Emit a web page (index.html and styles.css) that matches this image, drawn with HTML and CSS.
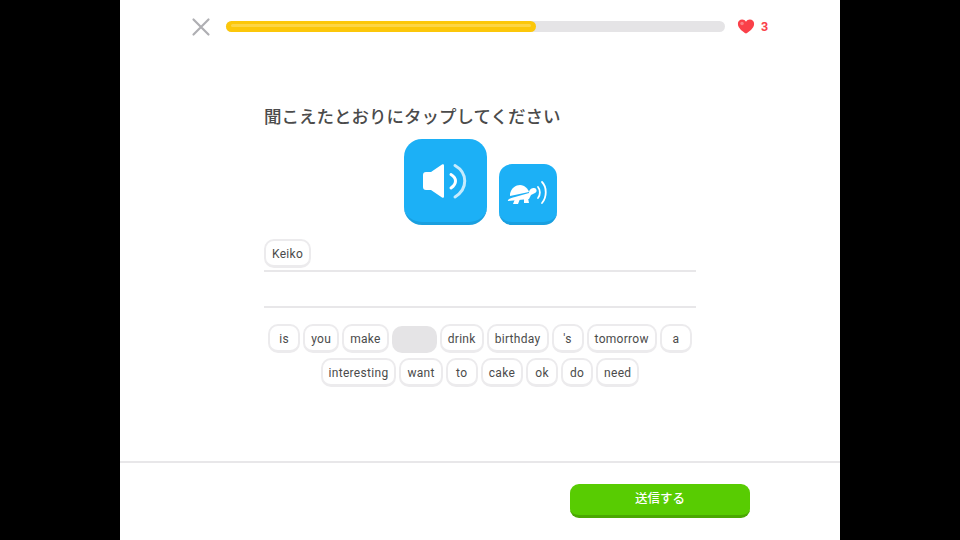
FILE: index.html
```html
<!DOCTYPE html>
<html lang="ja">
<head>
  <meta charset="UTF-8" />
  <title>Lesson</title>
  <link rel="stylesheet" href="styles.css">
</head>
<body>

<div class="app">
  <div class="topbar">
    <svg class="close" width="20" height="20" viewBox="0 0 20 20">
      <path d="M2.500 2.500 L17.500 17.500 M17.500 2.500 L2.500 17.500" stroke="#afafb3" stroke-width="2.2" stroke-linecap="round" fill="none"/>
    </svg>
    <div class="progress">
      <div class="progress-fill"><div class="progress-shine"></div></div>
    </div>
    <svg class="heart" width="18" height="15" viewBox="0 0 20 17">
      <path d="M10 16.500 C7 14.600 1 10.800 .8 5.600 C.7 2.600 3 .6 5.600 .6 C7.500 .6 9 1.500 10 3 C11 1.500 12.500 .6 14.400 .6 C17 .6 19.300 2.600 19.200 5.600 C19 10.800 13 14.600 10 16.500 Z" fill="#fa4049"/>
      <circle cx="5.500" cy="5" r="2" fill="#fc7f85"/>
    </svg>
    <span class="hearts">3</span>
  </div>

  <div class="main">
    <h2>聞こえたとおりにタップしてください</h2>

    <div class="audio">
      <div class="audio-btn big">
        <svg width="46" height="38" viewBox="0 0 46 38">
          <path d="M1 13 C1 11 2 10 4 10 L9 10 L20 2.500 C21 1.800 22 2.200 22 3.500 L22 34.500 C22 35.800 21 36.200 20 35.500 L9 28 L4 28 C2 28 1 27 1 25 Z" fill="#fff"/>
          <path d="M29 12.500 C35 16 35 22 29 26" stroke="#fff" stroke-width="3" stroke-linecap="round" fill="none"/>
          <path d="M33 3.500 C46 11 46 27 33 35" stroke="#c5ebfd" stroke-width="3" stroke-linecap="round" fill="none"/>
        </svg>
      </div>
      <div class="audio-btn small">
        <svg width="42" height="26" viewBox="0 0 42 26">
          <path d="M3 14 C4 8 9 5 13 5 C18 5 21 9 22 12 L3 16 Z" fill="#fff"/>
          <path d="M22 13 C22 9 25 8 27 8 C30 8 30.500 12 28 13 L24 15 L22 19 L1 21 C0 19 5 18 8 17 Z" fill="#fff"/>
          <path d="M8 19 L6 24 L11 24 L13 19 Z M17 18 L17 23 L22 23 L21 18 Z" fill="#fff"/>
          <path d="M31 7 C33.500 10 33.500 15 31 18" stroke="#fff" stroke-width="1.800" stroke-linecap="round" fill="none"/>
          <path d="M35 2 C40 7 40 17 35 23" stroke="#fff" stroke-width="1.800" stroke-linecap="round" fill="none"/>
        </svg>
      </div>
    </div>

    <div class="answer-line first">
      <span class="tile">Keiko</span>
    </div>
    <div class="answer-line second"></div>

    <div class="bank">
      <div class="bank-row">
        <span class="tile">is</span>
        <span class="tile">you</span>
        <span class="tile">make</span>
        <span class="tile empty"></span>
        <span class="tile">drink</span>
        <span class="tile">birthday</span>
        <span class="tile">'s</span>
        <span class="tile">tomorrow</span>
        <span class="tile">a</span>
      </div>
      <div class="bank-row">
        <span class="tile">interesting</span>
        <span class="tile">want</span>
        <span class="tile">to</span>
        <span class="tile">cake</span>
        <span class="tile">ok</span>
        <span class="tile">do</span>
        <span class="tile">need</span>
      </div>
    </div>
  </div>

  <div class="footer">
    <button type="button">送信する</button>
  </div>
</div>

</body>
</html>
```

FILE: styles.css
```css
html, body {
  height: 100%;
}

body {
  margin: 0;
  background-color: #000;
  font-family: "Roboto", "Noto Sans CJK JP", sans-serif;
}

.app {
  width: 720px;
  height: 540px;
  margin: 0 auto;
  background: #fff;
  display: flex;
  flex-direction: column;
}

.topbar {
  display: flex;
  align-items: center;
  height: 53px;
  padding-left: 71px;
  box-sizing: border-box;
}

.close {
  flex: none;
}

.progress {
  width: 499px;
  height: 11px;
  margin-left: 15px;
  background: #e5e4e6;
  border-radius: 6px;
}

.progress-fill {
  width: 310px;
  height: 11px;
  padding: 3px 5px 0;
  box-sizing: border-box;
  background: #fcc70a;
  border-radius: 6px;
}

.progress-shine {
  height: 3px;
  background: #fdd544;
  border-radius: 2px;
}

.heart {
  margin-left: 12px;
  flex: none;
}

.hearts {
  margin-left: 6px;
  color: #fa4049;
  font-size: 12.5px;
  font-weight: bold;
}

.main {
  flex: 1;
  padding: 0 144px;
}

h2 {
  margin: 50px 0 0;
  height: 26px;
  line-height: 26px;
  font-family: "Noto Sans CJK JP", sans-serif;
  font-size: 17.5px;
  font-weight: 500;
  color: #4b4b4b;
  white-space: nowrap;
}

.audio {
  display: flex;
  justify-content: center;
  align-items: flex-end;
  gap: 12px;
  margin-top: 10px;
}

.audio-btn {
  background: #1cb0f6;
  border-bottom: 3px solid #1a9fdf;
  box-sizing: border-box;
  display: flex;
  align-items: center;
  justify-content: center;
}

.audio-btn.big {
  width: 83px;
  height: 86px;
  border-radius: 18px;
}

.audio-btn.small {
  width: 58px;
  height: 61px;
  border-radius: 13px;
}

.answer-line {
  box-sizing: border-box;
  border-bottom: 2px solid #e8e7e9;
  display: flex;
  align-items: flex-start;
}

.answer-line.first {
  height: 33px;
  margin-top: 14px;
}

.answer-line.second {
  height: 36px;
}

.tile {
  box-sizing: border-box;
  display: inline-flex;
  align-items: center;
  justify-content: center;
  height: 29px;
  min-width: 32px;
  padding: 2px 6px 0;
  background: #fff;
  border: 2px solid #ecebed;
  border-bottom-width: 3px;
  border-radius: 10px;
  font-size: 12px;
  letter-spacing: .3px;
  color: #4b4b4b;
}

.tile.empty {
  width: 45px;
  height: 27px;
  margin-top: 2px;
  background: #e5e4e6;
  border: none;
}

.bank {
  margin-top: 16px;
}

.bank-row {
  display: flex;
  justify-content: center;
  gap: 3px;
  margin-bottom: 5px;
}

.footer {
  height: 79px;
  box-sizing: border-box;
  border-top: 2px solid #e8e7e9;
  display: flex;
  justify-content: flex-end;
  padding: 21px 90px 0 0;
}

button {
  width: 180px;
  height: 34px;
  padding: 0 0 5px;
  background-color: #58cc02;
  color: #fff;
  border: none;
  border-bottom: 3px solid #4aa802;
  border-radius: 9px;
  font-family: "Noto Sans CJK JP", sans-serif;
  font-size: 12.5px;
  font-weight: 500;
  cursor: pointer;
}
```
